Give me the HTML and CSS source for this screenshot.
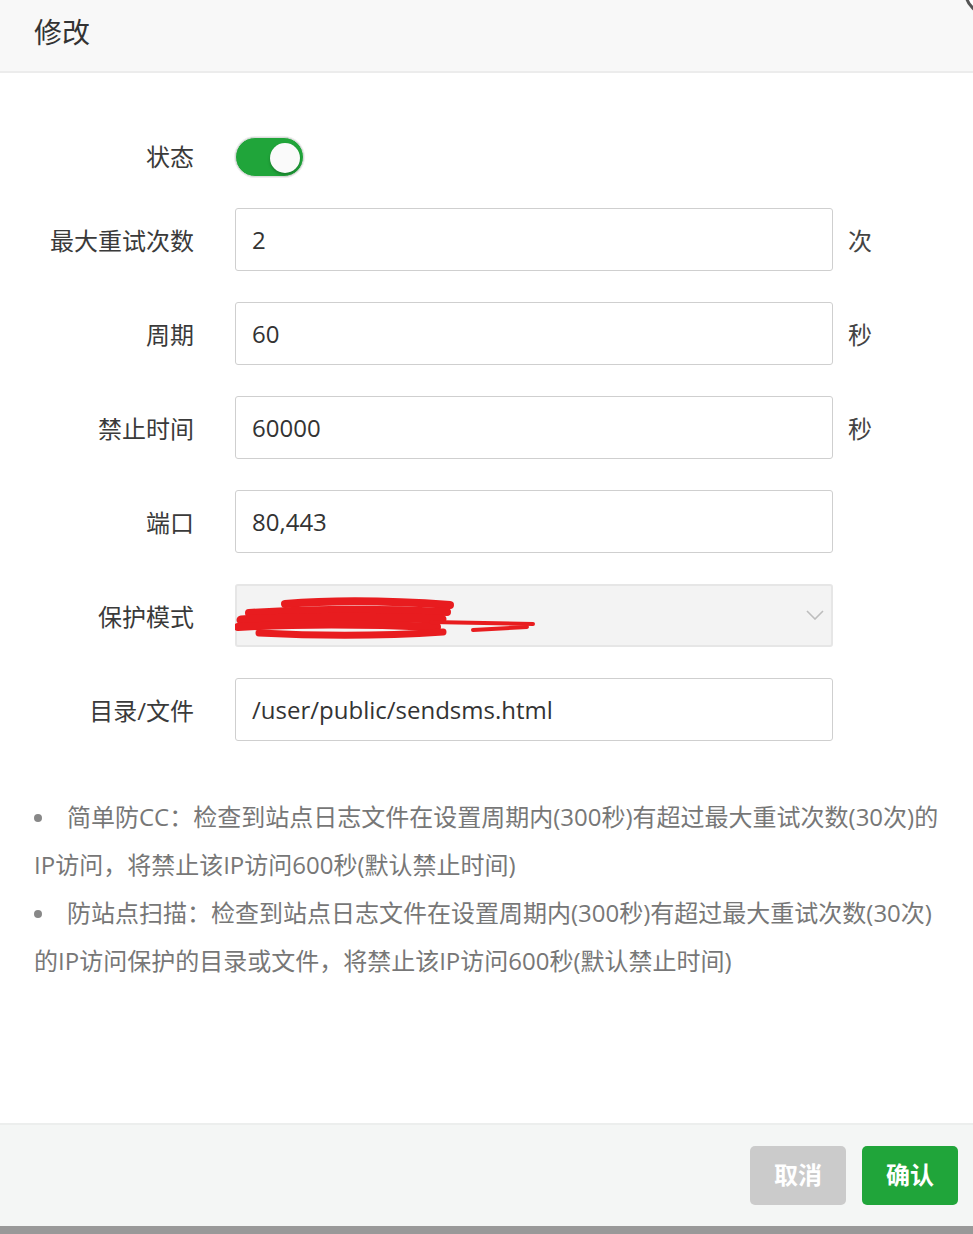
FILE: index.html
```
<!DOCTYPE html>
<html lang="zh-CN">
<head>
<meta charset="utf-8">
<title>修改</title>
<link rel="stylesheet" href="styles.css">
</head>
<body>
<div class="dialog">
  <span class="close"></span>
  <div class="hd">修改</div>
  <div class="bd">
    <div class="form">
      <div class="row row-switch">
        <label class="lbl">状态</label>
        <span class="switch"><span class="knob"></span></span>
      </div>
      <div class="row">
        <label class="lbl">最大重试次数</label>
        <input class="inp" type="text" value="2">
        <span class="unit">次</span>
      </div>
      <div class="row">
        <label class="lbl">周期</label>
        <input class="inp" type="text" value="60">
        <span class="unit">秒</span>
      </div>
      <div class="row">
        <label class="lbl">禁止时间</label>
        <input class="inp" type="text" value="60000">
        <span class="unit">秒</span>
      </div>
      <div class="row">
        <label class="lbl">端口</label>
        <input class="inp" type="text" value="80,443">
      </div>
      <div class="row">
        <label class="lbl">保护模式</label>
        <div class="select">
          <svg class="scribble" width="310" height="63" viewBox="0 0 310 63">
            <g fill="none" stroke="#e81c1f" stroke-linecap="round">
              <path d="M50 20 Q120 14 215 21" stroke-width="8"/>
              <path d="M14 29 Q110 23 212 28" stroke-width="8"/>
              <path d="M6 36 Q100 31 207 35" stroke-width="9"/>
              <path d="M3 43 Q90 38 202 43" stroke-width="8"/>
              <path d="M24 49 Q120 54 208 48" stroke-width="7"/>
              <path d="M196 38 Q250 39 298 40" stroke-width="4"/>
              <path d="M238 46 L292 43" stroke-width="4"/>
            </g>
          </svg>
          <svg class="arrow" width="18" height="10" viewBox="0 0 18 10"><path d="M1 1 L9 9 L17 1" fill="none" stroke="#bdbdbd" stroke-width="1.6"/></svg>
        </div>
      </div>
      <div class="row">
        <label class="lbl">目录/文件</label>
        <input class="inp" type="text" value="/user/public/sendsms.html">
      </div>
    </div>
    <ul class="notes">
      <li>简单防CC：检查到站点日志文件在设置周期内(300秒)有超过最大重试次数(30次)的IP访问，将禁止该IP访问600秒(默认禁止时间)</li>
      <li>防站点扫描：检查到站点日志文件在设置周期内(300秒)有超过最大重试次数(30次)的IP访问保护的目录或文件，将禁止该IP访问600秒(默认禁止时间)</li>
    </ul>
  </div>
  <div class="ft">
    <button class="btn cancel">取消</button>
    <button class="btn ok">确认</button>
  </div>
</div>
</body>
</html>
```

FILE: styles.css
```
* { box-sizing: border-box; }
html, body { margin: 0; padding: 0; }
body {
  background: #999;
  font-family: "Open Sans", "Noto Sans CJK SC", sans-serif;
  color: #333;
  height: 1234px;
  overflow: hidden;
}
.dialog {
  position: relative;
  width: 973px;
  height: 1226px;
  background: #fff;
  display: flex;
  flex-direction: column;
  overflow: hidden;
}
.close {
  position: absolute;
  left: 963px;
  top: -42px;
  width: 60px;
  height: 60px;
  border-radius: 50%;
  border: 3px solid #555;
  background: #fff;
  filter: blur(0.6px);
}
.hd {
  height: 73px;
  flex: none;
  background: #f8f8f8;
  border-bottom: 2px solid #ececec;
  padding-left: 34px;
  font-size: 28px;
  line-height: 64px;
  color: #333;
}
.bd {
  flex: 1;
  padding-top: 64px;
}
.form { display: flex; flex-direction: column; }
.row {
  display: flex;
  align-items: center;
  height: 63px;
  margin-bottom: 31px;
}
.row-switch { height: 40px; }
.row-switch .lbl { position: relative; top: -2px; }
.lbl {
  width: 194px;
  margin-right: 41px;
  text-align: right;
  font-size: 24px;
  color: #3a3a3a;
}
.switch {
  position: relative;
  width: 69px;
  height: 40px;
  border-radius: 20px;
  background: #20a53a;
  border: 1px solid #dcdcdc;
  box-shadow: 0 0 0 1px #eee;
}
.knob {
  position: absolute;
  right: 3px;
  top: 5px;
  width: 30px;
  height: 30px;
  border-radius: 50%;
  background: #fafafa;
  box-shadow: 0 2px 3px rgba(0,0,0,0.25);
}
.inp {
  width: 598px;
  height: 63px;
  border: 1px solid #cfcfcf;
  border-radius: 3px;
  padding: 0 16px;
  font-family: "Open Sans", "Noto Sans CJK SC", sans-serif;
  font-size: 24px;
  color: #333;
  background: #fff;
  outline: none;
}
.unit {
  margin-left: 15px;
  font-size: 24px;
  color: #444;
}
.select {
  position: relative;
  width: 598px;
  height: 63px;
  border: 2px solid #e6e6e6;
  border-radius: 3px;
  background: #f3f3f3;
}
.scribble { position: absolute; left: -2px; top: -2px; }
.arrow { position: absolute; right: 7px; top: 24px; }
.notes {
  list-style: none;
  margin: 21px 0 0;
  padding: 0 21px 0 34px;
  font-size: 24px;
  line-height: 48px;
  color: #777;
}
.notes li::before {
  content: "";
  display: inline-block;
  width: 8px;
  height: 8px;
  border-radius: 50%;
  background: #888;
  margin-right: 25px;
  vertical-align: middle;
  position: relative;
  top: -2px;
}
.ft {
  flex: none;
  height: 103px;
  border-top: 2px solid #eceeed;
  background: #f4f6f5;
  display: flex;
  justify-content: flex-end;
  align-items: flex-start;
  gap: 16px;
  padding: 21px 15px 0 0;
}
.btn {
  width: 96px;
  height: 59px;
  border: none;
  border-radius: 5px;
  color: #fff;
  font-family: "Noto Sans CJK SC", sans-serif;
  font-weight: bold;
  font-size: 24px;
  line-height: 54px;
  padding: 0 0 4px;
}
.cancel { background: #cbcbcb; }
.ok { background: #20a53a; }
```
